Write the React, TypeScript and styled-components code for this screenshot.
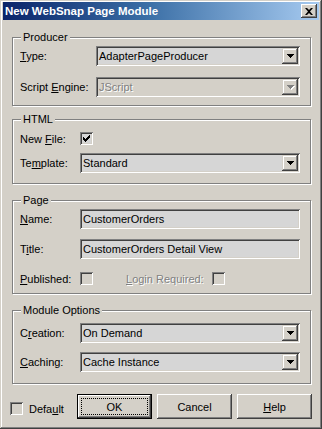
import React from 'react';
import styled, {createGlobalStyle} from 'styled-components';

const GlobalStyle = createGlobalStyle`
  html, body {
    margin: 0;
    padding: 0;
    background: #d4d0c8;
  }
  body {
    font-family: "Liberation Sans", Arial, sans-serif;
    font-size: 11px;
    color: #000;
  }
`;

const FACE = '#d4d0c8';
const FIELD = '#d6d6d6';

const Dialog = styled.div`
  width: 322px;
  height: 429px;
  box-sizing: border-box;
  padding: 2px 3px 3px 3px;
  background: ${FACE};
  box-shadow: inset -1px -1px 0 #404040, inset 1px 1px 0 ${FACE},
    inset -2px -2px 0 #808080, inset 2px 2px 0 #fff;
  display: flex;
  flex-direction: column;
`;

const TitleBar = styled.div`
  height: 18px;
  display: flex;
  align-items: center;
  padding-left: 2px;
  padding-right: 2px;
  background: linear-gradient(to right, #0a246a 0%, #3a6ea5 45%, #a6caf0 100%);
`;

const TitleText = styled.span`
  flex: 1;
  color: #fff;
  font-weight: bold;
  font-size: 11.5px;
  white-space: nowrap;
`;

const CloseButton = styled.div`
  width: 16px;
  height: 14px;
  box-sizing: border-box;
  background: ${FACE};
  box-shadow: inset -1px -1px 0 #404040, inset 1px 1px 0 #fff,
    inset -2px -2px 0 #808080;
  display: flex;
  align-items: center;
  justify-content: center;
`;

const Body = styled.div`
  padding: 0 8px 0 9px;
  display: flex;
  flex-direction: column;
`;

const Group = styled.div<{ $top: number; $height: number; $labelWidth?: number }>`
  position: relative;
  margin-top: ${p => p.$top}px;
  height: ${p => p.$height}px;
  box-sizing: border-box;
  border: 1px solid #808080;
  box-shadow: inset 1px 1px 0 #fff, 1px 1px 0 #fff;
  padding: 0 10px 0 7px;
  display: grid;
  grid-template-columns: ${p => p.$labelWidth ?? 60}px 1fr;
  align-content: start;
  align-items: center;
`;

const Caption = styled.span`
  position: absolute;
  top: -8px;
  left: 8px;
  padding: 0 2px;
  background: ${FACE};
  font-size: 11px;
  line-height: 14px;
`;

const Label = styled.span<{ $disabled?: boolean }>`
  white-space: nowrap;
  color: ${p => (p.$disabled ? '#808080' : '#000')};
  text-shadow: ${p => (p.$disabled ? '1px 1px 0 #fff' : 'none')};
`;

const Acc = styled.u`
  text-decoration: underline;
  text-underline-offset: 1px;
`;

const Spacer = styled.div<{ $h: number }>`
  grid-column: 1 / -1;
  height: ${p => p.$h}px;
`;

const Sunken = styled.div<{ $disabled?: boolean }>`
  height: 20px;
  box-sizing: border-box;
  padding: 2px;
  background: ${p => (p.$disabled ? FACE : FIELD)};
  box-shadow: inset 1px 1px 0 #808080, inset -1px -1px 0 #fff,
    inset 2px 2px 0 #404040, inset -2px -2px 0 ${FACE};
  display: flex;
  align-items: center;
`;

const FieldText = styled.span<{ $disabled?: boolean }>`
  flex: 1;
  padding-left: 1px;
  white-space: nowrap;
  overflow: hidden;
  color: ${p => (p.$disabled ? '#808080' : '#000')};
  text-shadow: ${p => (p.$disabled ? '1px 1px 0 #fff' : 'none')};
`;

const DropButton = styled.div`
  width: 16px;
  height: 16px;
  box-sizing: border-box;
  background: ${FACE};
  box-shadow: inset -1px -1px 0 #404040, inset 1px 1px 0 ${FACE},
    inset -2px -2px 0 #808080, inset 2px 2px 0 #fff;
  display: flex;
  align-items: center;
  justify-content: center;
`;

const Check = styled.div<{ $field?: boolean }>`
  width: 13px;
  height: 13px;
  box-sizing: border-box;
  background: ${p => (p.$field ? FIELD : FACE)};
  box-shadow: inset 1px 1px 0 #808080, inset -1px -1px 0 #fff,
    inset 2px 2px 0 #404040, inset -2px -2px 0 ${FACE};
  display: flex;
  align-items: center;
  justify-content: center;
  flex: none;
`;

const CheckRow = styled.div`
  display: flex;
  align-items: center;
  height: 13px;
`;

const LoginLabel = styled(Label)`
  margin-left: 33px;
  margin-right: 8px;
`;

const Footer = styled.div`
  margin-top: 10px;
  margin-left: -2px;
  margin-right: -1px;
  display: flex;
  align-items: center;
`;

const DefaultBox = styled.div`
  display: flex;
  align-items: center;
  gap: 6px;
  margin-top: 4px;
`;

const Buttons = styled.div`
  margin-left: auto;
  display: flex;
  gap: 5px;
`;

const PushButton = styled.div<{ $default?: boolean }>`
  position: relative;
  width: 75px;
  height: 25px;
  box-sizing: border-box;
  background: ${FACE};
  display: flex;
  align-items: center;
  justify-content: center;
  font-size: 11px;
  box-shadow: ${p =>
    p.$default
      ? `inset 0 0 0 1px #000, inset -2px -2px 0 #404040, inset 2px 2px 0 #fff, inset -3px -3px 0 #808080`
      : `inset -1px -1px 0 #404040, inset 1px 1px 0 #fff, inset -2px -2px 0 #808080`};
`;

const FocusRing = styled.div`
  position: absolute;
  inset: 4px;
  border: 1px dotted #000;
`;

const Arrow = ({disabled}: { disabled?: boolean }) => (
  <svg width="7" height="5" viewBox="0 0 7 5" style={{overflow: 'visible'}}>
    {disabled && <path d="M1 1h7v1H7v1H6v1H5v1H4V4H3V3H2V2H1z" fill="#fff"/>}
    <path d="M0 0h7v1H6v1H5v1H4v1H3V3H2V2H1V1H0z" fill={disabled ? '#808080' : '#000'}/>
  </svg>
);

const Tick = () => (
  <svg width="7" height="7" viewBox="0 0 7 7">
    <path d="M0 2h1v1h1v1h1V3h1V2h1V1h1V0h1v3H6v1H5v1H4v1H3v1H2V6H1V5H0z" fill="#000"/>
  </svg>
);

const Combo = ({value, disabled}: { value: string; disabled?: boolean }) => (
  <Sunken $disabled={disabled}>
    <FieldText $disabled={disabled}>{value}</FieldText>
    <DropButton>
      <Arrow disabled={disabled}/>
    </DropButton>
  </Sunken>
);

const Edit = ({value}: { value: string }) => (
  <Sunken>
    <FieldText>{value}</FieldText>
  </Sunken>
);

export default function App() {
  return (
    <>
      <GlobalStyle/>
      <Dialog>
        <TitleBar>
          <TitleText>New WebSnap Page Module</TitleText>
          <CloseButton>
            <svg width="8" height="7" viewBox="0 0 8 7">
              <path d="M0 0h2l2 2 2-2h2L5 3.5 8 7H6L4 5 2 7H0l3-3.5z" fill="#000"/>
            </svg>
          </CloseButton>
        </TitleBar>
        <Body>
          <Group $top={17} $height={69} $labelWidth={76}>
            <Caption>Producer</Caption>
            <Spacer $h={8}/>
            <Label><Acc>T</Acc>ype:</Label>
            <Combo value="AdapterPageProducer"/>
            <Spacer $h={11}/>
            <Label>Script <Acc>E</Acc>ngine:</Label>
            <Combo value="JScript" disabled/>
          </Group>

          <Group $top={13} $height={65}>
            <Caption>HTML</Caption>
            <Spacer $h={12}/>
            <Label>New <Acc>F</Acc>ile:</Label>
            <CheckRow>
              <Check $field><Tick/></Check>
            </CheckRow>
            <Spacer $h={8}/>
            <Label>Te<Acc>m</Acc>plate:</Label>
            <Combo value="Standard"/>
          </Group>

          <Group $top={16} $height={94}>
            <Caption>Page</Caption>
            <Spacer $h={8}/>
            <Label><Acc>N</Acc>ame:</Label>
            <Edit value="CustomerOrders"/>
            <Spacer $h={10}/>
            <Label>T<Acc>i</Acc>tle:</Label>
            <Edit value="CustomerOrders Detail View"/>
            <Spacer $h={13}/>
            <Label><Acc>P</Acc>ublished:</Label>
            <CheckRow>
              <Check/>
              <LoginLabel $disabled><Acc>L</Acc>ogin Required:</LoginLabel>
              <Check/>
            </CheckRow>
          </Group>

          <Group $top={16} $height={74}>
            <Caption>Module Options</Caption>
            <Spacer $h={12}/>
            <Label>C<Acc>r</Acc>eation:</Label>
            <Combo value="On Demand"/>
            <Spacer $h={9}/>
            <Label><Acc>C</Acc>aching:</Label>
            <Combo value="Cache Instance"/>
          </Group>

          <Footer>
            <DefaultBox>
              <Check/>
              <Label>Defa<Acc>u</Acc>lt</Label>
            </DefaultBox>
            <Buttons>
              <PushButton $default>
                OK
                <FocusRing/>
              </PushButton>
              <PushButton>Cancel</PushButton>
              <PushButton><span><Acc>H</Acc>elp</span></PushButton>
            </Buttons>
          </Footer>
        </Body>
      </Dialog>
    </>
  );
}
